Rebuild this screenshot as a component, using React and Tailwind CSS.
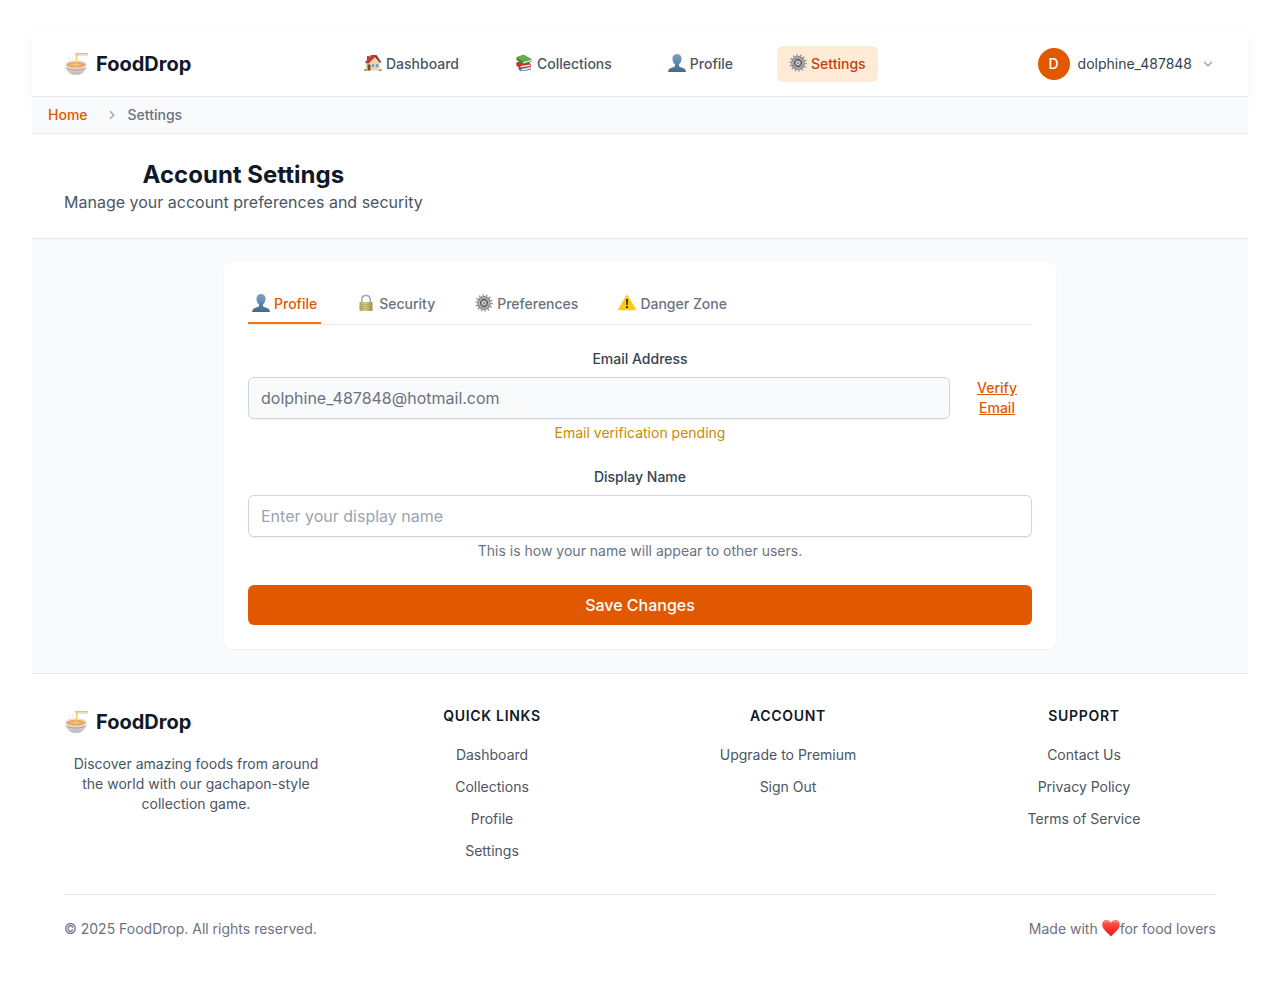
import React from "react";

function Bowl() {
  return (
    <svg viewBox="0 0 24 24" className="size-6 shrink-0">
      <defs>
        <linearGradient id="bowl" x1="0" x2="0" y1="0" y2="1">
          <stop offset="0" stopColor="#f1f1f1" />
          <stop offset="1" stopColor="#b4b6b8" />
        </linearGradient>
      </defs>
      <path d="M1.200 12.500C1.200 17.500 5 21.500 8.500 22.700h7c3.500-1.200 7.300-5.200 7.300-10.200z" fill="url(#bowl)" />
      <path d="M2 15.500C7 18.200 17 18.200 22 15.500l-.5 1.300C16.500 19.200 7.500 19.200 2.500 16.800z" fill="#e2837b" />
      <ellipse cx="12" cy="12.300" rx="10.800" ry="3.900" fill="#dfdfdf" />
      <ellipse cx="12" cy="12.700" rx="9.500" ry="2.900" fill="#f0a45c" />
      <path d="M5 12.500q4-1.600 7-.5t7 0q-3 2.200-7 1.700t-7-1.200" fill="#f8c47a" />
      <path d="M6 5q-1.500 1.500 0 3t0 2M9 4.500q-1 1.500 0 3t0 2" fill="none" stroke="#e5e7e9" strokeWidth="1" />
      <path d="M11.700 1.500h2l-.6 11.500h-1.200z" fill="#f2d464" />
      <path d="M11.300 1.200H24v1H11.300z" fill="#cdb083" />
      <path d="M11.700 2.600H24v.9H11.700z" fill="#d9c3a0" />
    </svg>
  );
}

function House() {
  return (
    <svg viewBox="0 0 18 18" className="-mt-0.5 size-[18px] shrink-0">
      <path d="M3 2h2v4H3z" fill="#8e4a3b" />
      <path d="M2.500 8 9 2.500 15.500 8v8.500h-13z" fill="#ecd4ac" />
      <path d="M2.500 8.500h2v8h-2z" fill="#d4b486" />
      <path d="M1 8.500 6.500 1.200h6L17 8l-1 .9-5-5.700-6.500 6.300L1.500 9z" fill="#b8433a" />
      <path d="M6.500 1.200h6L17 8l-.8.6-5.200-6z" fill="#8b2f2b" />
      <path d="M3.800 10.500h2.700v6H3.800z" fill="#7b4c2e" />
      <path d="M7.800 10h2.600v3.200H7.800zM11.800 10h2.800v3.200h-2.800z" fill="#5995bf" stroke="#f7eed9" strokeWidth=".4" />
      <path d="M0 15.500q1.800-1.500 3.300 1.300H.5zM14.500 16.800q.8-2.500 3.300-1.200v1.200z" fill="#5f9140" />
    </svg>
  );
}

function Books() {
  return (
    <svg viewBox="0 0 18 18" className="-mt-0.5 size-[18px] shrink-0">
      <path d="m4 11.500 10.500-.7 1.500 1.500v3.500L6 17.300l-2.500-2z" fill="#4a5c93" />
      <path d="m6 15 9.800-2v2L6.200 16.700z" fill="#e7e6e4" />
      <path d="M1.200 8.500 12 6l3.700 4.200v2.500L5.500 14.300 1.500 12z" fill="#c4322c" />
      <path d="m5.300 12 10-1.400v1.500L5.600 13.600z" fill="#eee6dd" />
      <path d="m1.500 3.300 7.300-2.500 7.700 4.400-.2 2.500L8 10.400 1.500 6z" fill="#3d8a3a" />
      <path d="m1.500 3.300 7.300-2.500 7.700 4.400L8 7.400z" fill="#61ad50" />
      <path d="m8 8 8.200-2.300v1.400L8.100 9.500z" fill="#e9efe2" />
    </svg>
  );
}

function Person() {
  return (
    <svg viewBox="0 0 18 18" className="-mt-0.5 size-[18px] shrink-0">
      <defs>
        <linearGradient id="person" x1="0" x2="0" y1="0" y2="1">
          <stop offset="0" stopColor="#7ba5c6" />
          <stop offset="1" stopColor="#426a90" />
        </linearGradient>
      </defs>
      <path d="M9 0C5.800 0 4.300 2.300 4.500 5.200c.1 2.200 1.100 4.100 2.400 5.100v1.900C5.500 13.700.3 13.300 0 18h18c-.3-4.700-5.500-4.300-6.900-5.800v-1.900c1.300-1 2.300-2.900 2.400-5.100C13.700 2.300 12.200 0 9 0z" fill="url(#person)" />
    </svg>
  );
}

function Gear() {
  return (
    <svg viewBox="0 0 18 18" className="-mt-0.5 size-[18px] shrink-0">
      <circle cx="9" cy="9" r="7.800" fill="none" stroke="#8d9093" strokeWidth="2" strokeDasharray="1.300 2.200" />
      <circle cx="9" cy="9" r="5.700" fill="none" stroke="#808387" strokeWidth="2.400" />
      <circle cx="9" cy="9" r="5.400" fill="none" stroke="#b4b7b9" strokeWidth="1" />
      <circle cx="9" cy="9" r="3.600" fill="#8b8e92" stroke="#55585d" strokeWidth="1.100" />
      <circle cx="9" cy="9" r="2.100" fill="#dcdee0" />
      <path d="m8.500 8 1.900 1-1.900 1.200z" fill="#45484c" />
    </svg>
  );
}

function Lock() {
  return (
    <svg viewBox="0 0 18 18" className="-mt-0.5 size-[18px] shrink-0">
      <defs>
        <linearGradient id="lock" x1="0" x2="1" y1="0" y2="0">
          <stop offset="0" stopColor="#b0a351" />
          <stop offset=".45" stopColor="#d7cf87" />
          <stop offset="1" stopColor="#9a8d42" />
        </linearGradient>
      </defs>
      <path d="M4.700 9V5.800C4.700 0 13.300 0 13.300 5.800V9" fill="none" stroke="#a3a8ac" strokeWidth="1.500" />
      <rect x="2.500" y="8" width="13" height="9" rx=".8" fill="url(#lock)" />
      <path d="M2.800 10.500h12.400M2.800 12.500h12.400M2.800 14.500h12.400" stroke="#a99d51" strokeWidth=".5" />
    </svg>
  );
}

function Warning() {
  return (
    <svg viewBox="0 0 18 18" className="-mt-0.5 size-[18px] shrink-0">
      <path d="M8.100 1.700q.9-1.400 1.800 0L17.800 15q.5 1.200-.8 1.300H1Q-.3 16.200.2 15z" fill="#fdcb10" />
      <path d="M8 5h2l-.4 6H8.400z" fill="#29230f" />
      <circle cx="9" cy="13.200" r="1.100" fill="#29230f" />
    </svg>
  );
}

function Heart() {
  return (
    <svg viewBox="0 0 18 18" className="-mt-0.5 size-[18px] shrink-0">
      <defs>
        <linearGradient id="heart" x1="0" x2="0" y1="0" y2="1">
          <stop offset="0" stopColor="#ff6a5c" />
          <stop offset=".5" stopColor="#f9352e" />
          <stop offset="1" stopColor="#d81f1d" />
        </linearGradient>
      </defs>
      <path d="M9 4C7.500-.3.200-.2.200 5.800.2 10.500 6 14 9 17.500c3-3.500 8.800-7 8.800-11.700C17.800-.2 10.500-.3 9 4z" fill="url(#heart)" />
      <path d="M2 4Q4 .8 7 3M11 3q3-2.200 5 1" stroke="#ffa399" strokeWidth=".8" fill="none" />
    </svg>
  );
}

function Chevron({ className }) {
  return (
    <svg viewBox="0 0 16 16" className={className} fill="none" stroke="currentColor" strokeWidth="1.400" strokeLinecap="round" strokeLinejoin="round">
      <path d="m4.500 6.300 3.500 3.500 3.500-3.500" />
    </svg>
  );
}

function Brand() {
  return (
    <div className="flex h-7 items-center gap-2">
      <Bowl />
      <span className="text-xl font-bold text-[#111827]">FoodDrop</span>
    </div>
  );
}

const nav = [
  ["Dashboard", House],
  ["Collections", Books],
  ["Profile", Person],
  ["Settings", Gear],
];

const tabs = [
  ["Profile", Person],
  ["Security", Lock],
  ["Preferences", Gear],
  ["Danger Zone", Warning],
];

const columns = [
  ["Quick Links", ["Dashboard", "Collections", "Profile", "Settings"]],
  ["Account", ["Upgrade to Premium", "Sign Out"]],
  ["Support", ["Contact Us", "Privacy Policy", "Terms of Service"]],
];

export default function App() {
  return (
    <div className="h-[1003px] w-full overflow-hidden bg-white pt-8 pl-8 font-['Inter',sans-serif] text-[#111827]">
      <div className="w-[1216px]">
        <header className="flex h-[65px] items-center border-b border-[#e5e7eb] bg-white px-8 shadow-[0_4px_16px_rgba(0,0,0,0.05)]">
          <div className="w-[288px]"><Brand /></div>
          <nav className="flex gap-8">
            {nav.map(([label, Icon]) => (
              <a key={label} className={label === "Settings" ? "flex h-9 items-center gap-1 rounded-md bg-[#ffead5] px-3 text-sm font-medium text-[#c2410c]" : "flex h-9 items-center gap-1 px-3 text-sm font-medium text-[#4b5563]"}>
                <Icon />{label}
              </a>
            ))}
          </nav>
          <div className="ml-auto flex items-center text-sm text-[#374151]">
            <span className="mr-2 flex size-8 items-center justify-center rounded-full bg-[#e25800] font-medium text-white">D</span>
            <span>dolphine_487848</span>
            <Chevron className="ml-2 size-4 text-[#9ca3af]" />
          </div>
        </header>

        <div className="relative flex h-[37px] items-center border-b border-[#e5e7eb] bg-[#f9fafb] px-4 text-sm font-medium">
          <a className="text-[#e25800]">Home</a>
          <Chevron className="mr-2 ml-4 size-4 -rotate-90 text-[#9ca3af]" />
          <span className="text-[#6b7280]">Settings</span>
        </div>

        <section className="relative flex h-[105px] flex-col items-start border-b border-[#e5e7eb] bg-white px-8 pt-[25px] shadow-[0_1px_2px_rgba(0,0,0,0.03)]">
          <div className="text-center">
            <h1 className="text-2xl leading-[31px] font-bold">Account Settings</h1>
            <p className="text-base leading-6 text-[#4b5563]">Manage your account preferences and security</p>
          </div>
        </section>

        <main className="h-[434px] bg-[#f9fafb] pt-[23px]">
          <div className="mx-auto h-[387px] w-[832px] rounded-lg bg-white px-6 pt-6 shadow-xs">
            <div className="flex h-[39px] gap-8 border-b border-[#e5e7eb]">
              {tabs.map(([label, Icon]) => (
                <button key={label} className={label === "Profile" ? "flex h-[38px] items-center gap-1 border-b-2 border-[#f97316] px-1 text-sm font-medium text-[#e25800]" : "flex h-[38px] items-center gap-1 border-b-2 border-transparent px-1 text-sm font-medium text-[#6b7280]"}>
                  <Icon />{label}
                </button>
              ))}
            </div>
            <div className="pt-6 text-center text-sm">
              <label className="block h-5 leading-5 font-medium text-[#374151]">Email Address</label>
              <div className="mt-2 flex h-[42px] items-center">
                <div className="flex h-full w-[702px] items-center rounded-md border border-[#d1d5db] bg-[#f9fafb] px-3 text-base text-[#6b7280] shadow-xs">dolphine_487848@hotmail.com</div>
                <a className="ml-3 w-[70px] px-3 leading-5 font-medium text-[#e25800] underline">Verify Email</a>
              </div>
              <p className="mt-1 leading-5 text-[#ca8a04]">Email verification pending</p>
              <label className="mt-6 block leading-5 font-medium text-[#374151]">Display Name</label>
              <input placeholder="Enter your display name" className="mt-2 block h-[42px] w-full rounded-md border border-[#d1d5db] bg-white px-3 text-base shadow-xs placeholder:text-[#9ca3af]" />
              <p className="mt-1 leading-5 text-[#6b7280]">This is how your name will appear to other users.</p>
              <button className="mt-6 block h-10 w-full rounded-md bg-[#e25800] text-base font-medium text-white">Save Changes</button>
            </div>
          </div>
        </main>

        <footer className="border-t border-[#e5e7eb] bg-white px-8 pt-8 text-sm">
          <div className="grid h-[188px] grid-cols-4 gap-8 text-center text-[#4b5563]">
            <div className="pt-0.5">
              <Brand />
              <p className="mt-[18px] leading-5">Discover amazing foods from around the world with our gachapon-style collection game.</p>
            </div>
            {columns.map(([title, links]) => (
              <div key={title}>
                <h3 className="leading-5 font-semibold tracking-wider text-[#111827] uppercase">{title}</h3>
                <ul className="mt-[17px] space-y-3">
                  {links.map((link) => <li key={link} className="h-5 leading-6">{link}</li>)}
                </ul>
              </div>
            ))}
          </div>
          <div className="flex items-center justify-between border-t border-[#e5e7eb] pt-6 text-[#6b7280]">
            <p className="leading-5">© 2025 FoodDrop. All rights reserved.</p>
            <p className="flex items-center leading-5">Made with&nbsp;<Heart />for food lovers</p>
          </div>
        </footer>
      </div>
    </div>
  );
}
